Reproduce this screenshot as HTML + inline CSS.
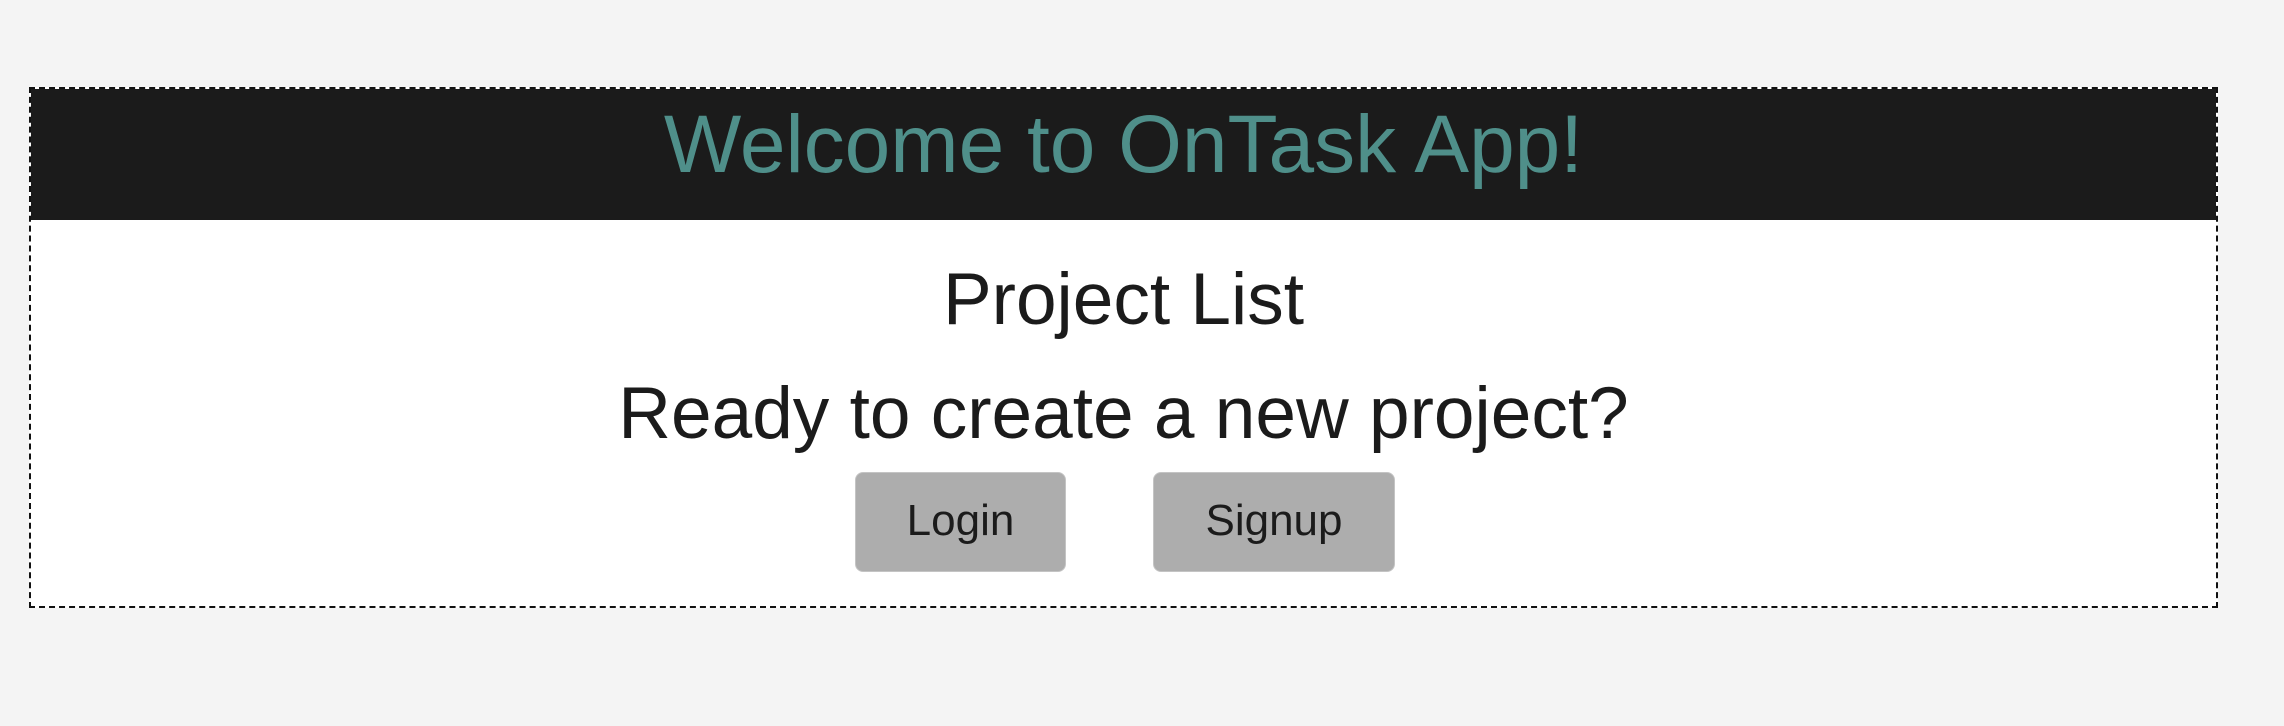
<!DOCTYPE html>
<html><head><meta charset="utf-8"><style>
html,body{margin:0;padding:0;width:2284px;height:726px;background:#f4f4f4;overflow:hidden;font-family:"Liberation Sans",sans-serif;}
.box{position:absolute;left:29px;top:87px;width:2185px;height:517px;border:2px dashed #111;background:#fff;}
.hdr{position:absolute;left:0;top:0;width:100%;height:131px;background:#1b1b1b;}
.t{position:absolute;left:0;width:100%;text-align:center;white-space:nowrap;}
.btn{position:absolute;top:383px;height:100px;background:#adadad;border-radius:8px;border:1px solid #c4c4c4;box-sizing:border-box;font-size:44px;color:#1b1b1b;text-align:center;line-height:96px;}
</style></head><body>
<div class="box">
<div class="hdr"><div class="t" style="top:6px;font-size:82px;line-height:100px;color:#4f8f8a;">Welcome to OnTask App!</div></div>
<div class="t" style="top:171px;font-size:73px;line-height:80px;color:#1b1b1b;">Project List</div>
<div class="t" style="top:285px;font-size:73px;line-height:80px;color:#1b1b1b;">Ready to create a new project?</div>
<div class="btn" style="left:824px;width:211px;">Login</div>
<div class="btn" style="left:1122px;width:242px;">Signup</div>
</div>
</body></html>
